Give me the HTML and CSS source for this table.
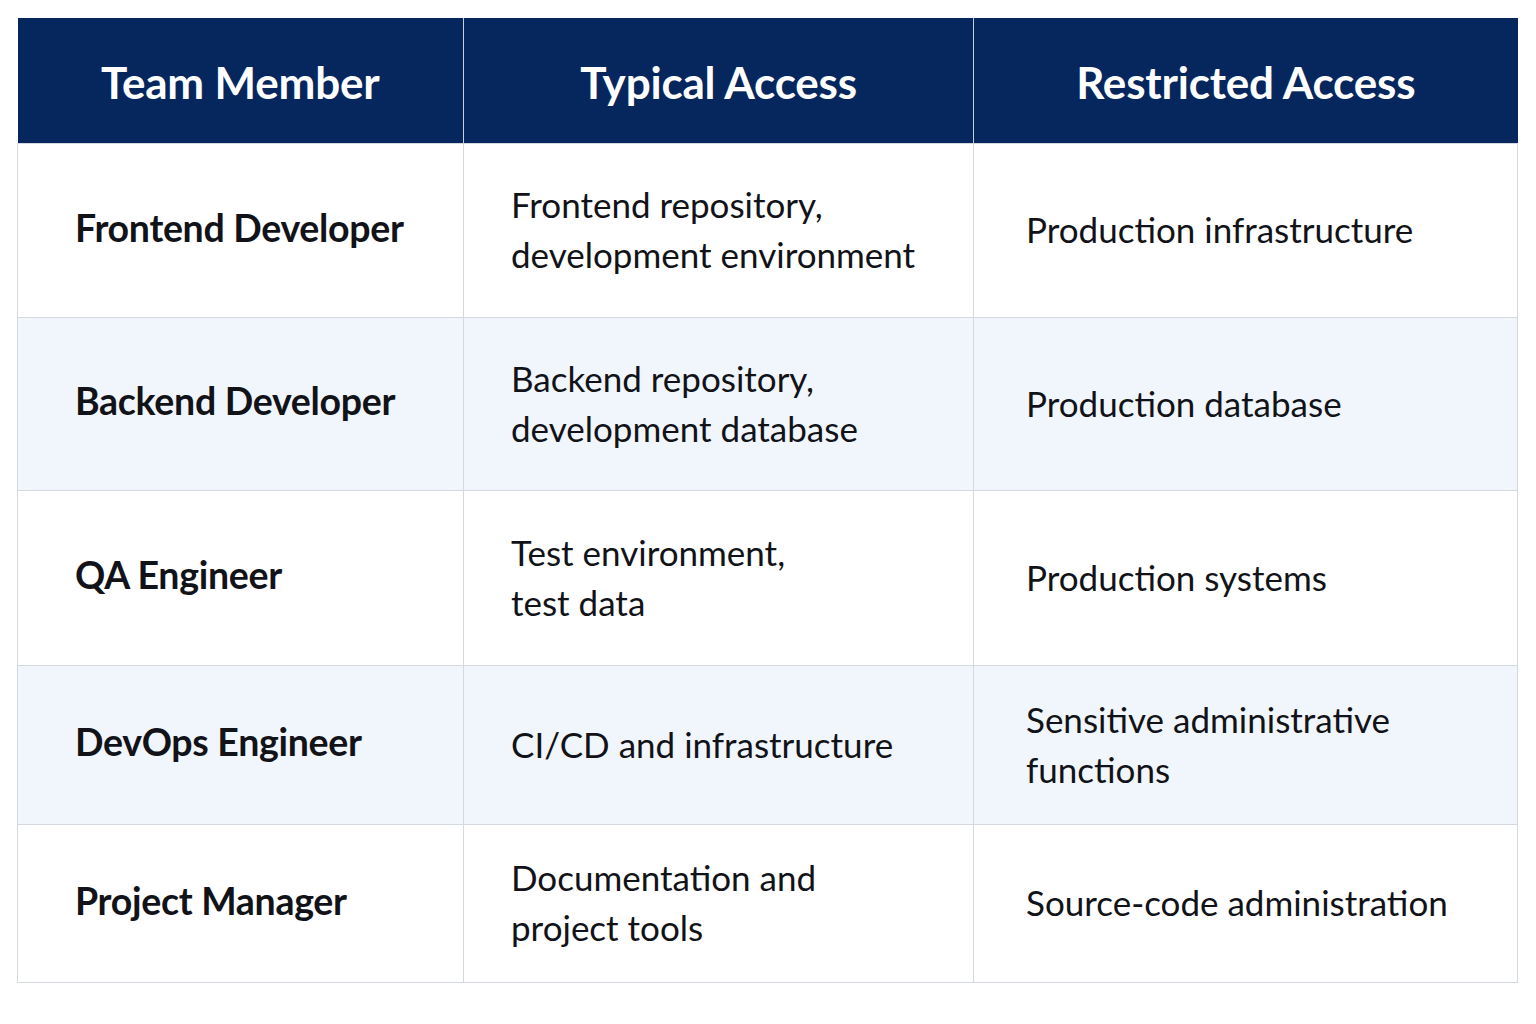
FILE: index.html
```html
<!DOCTYPE html>
<html lang="en">
<head>
<meta charset="utf-8">
<title>Access Matrix</title>
<link rel="stylesheet" href="styles.css">
</head>
<body>
<div class="page">
  <table class="access">
    <colgroup>
      <col class="c1"><col class="c2"><col class="c3">
    </colgroup>
    <thead>
      <tr class="hd"><th>Team Member</th><th>Typical Access</th><th>Restricted Access</th></tr>
    </thead>
    <tbody>
      <tr class="r1"><td class="role">Frontend Developer</td><td class="typ">Frontend repository,<br>development environment</td><td class="res">Production infrastructure</td></tr>
      <tr class="r2 alt"><td class="role">Backend Developer</td><td class="typ">Backend repository,<br>development database</td><td class="res">Production database</td></tr>
      <tr class="r3"><td class="role">QA Engineer</td><td class="typ">Test environment,<br>test data</td><td class="res">Production systems</td></tr>
      <tr class="r4 alt"><td class="role">DevOps Engineer</td><td class="typ">CI/CD and infrastructure</td><td class="res">Sensitive administrative<br>functions</td></tr>
      <tr class="r5"><td class="role">Project Manager</td><td class="typ">Documentation and<br>project tools</td><td class="res">Source-code administration</td></tr>
    </tbody>
  </table>
</div>
</body>
</html>
```
FILE: styles.css
```css
html, body { margin: 0; padding: 0; background: #ffffff; }
body { font-family: "Lato", "Noto Sans", sans-serif; color: #111318; }
.page { padding: 18px 0 0 17px; }
.access { border-collapse: collapse; width: 1500px; table-layout: fixed; }
.c1 { width: 446px; }
.c2 { width: 510px; }
.c3 { width: 544px; }
.hd { height: 125px; }
.access th {
  background: #06265e; color: #ffffff; font-weight: 700; font-size: 44px;
  padding: 4px 0 0; text-align: center; vertical-align: middle;
  border-left: 1px solid #c9cfda; letter-spacing: -0.2px;
}
.access th:first-child { border-left: none; }
.access td {
  border: 1px solid #d4d8df; vertical-align: middle; font-size: 35px; line-height: 50px;
  padding: 0 0 2px; color: #111318;
}
.access td.role { font-weight: 700; font-size: 37.5px; padding-left: 57px; padding-bottom: 5px; letter-spacing: -0.3px; }
.access td.typ { padding-left: 47px; }
.access td.res { padding-left: 52px; }
.r1 { height: 174px; }
.r2 { height: 173px; }
.r3 { height: 175px; }
.r4 { height: 159px; }
.r5 { height: 158px; }
.alt td { background: #f1f6fc; }
```
